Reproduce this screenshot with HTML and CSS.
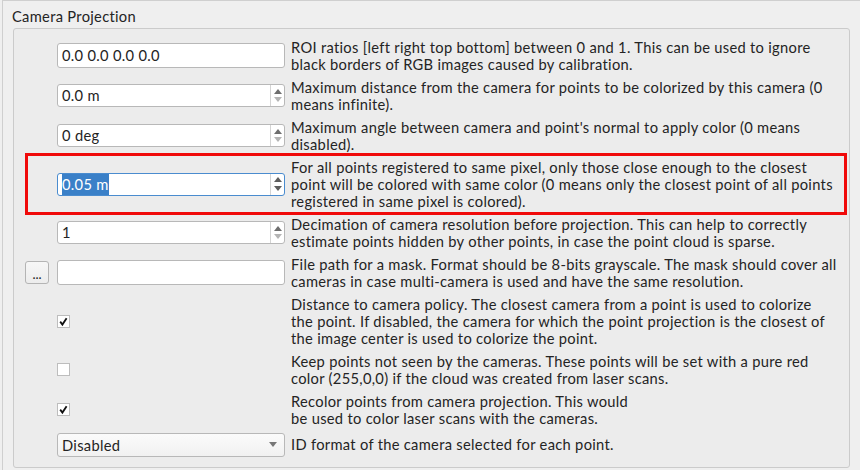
FILE: index.html
```html
<!DOCTYPE html>
<html>
<head>
<meta charset="utf-8">
<link rel="stylesheet" href="styles.css">
</head>
<body>
<div class="window">
  <div class="group-title">Camera Projection</div>
  <div class="group">
    <div class="rows">
      <div class="row">
        <div class="lead"></div>
        <div class="field"><div class="lineedit">0.0 0.0 0.0 0.0</div></div>
        <div class="label">ROI ratios [left right top bottom] between 0 and 1. This can be used to ignore<br>black borders of RGB images caused by calibration.</div>
      </div>
      <div class="row">
        <div class="lead"></div>
        <div class="field">
          <div class="spin">
            <span class="spin-text">0.0 m</span>
            <span class="spin-btns">
              <svg class="arr" width="8" height="5" viewBox="0 0 8 5"><path d="M0 5 L4 0 L8 5 Z" fill="#6e6e6e"/></svg>
              <svg class="arr" width="8" height="5" viewBox="0 0 8 5"><path d="M0 0 L4 5 L8 0 Z" fill="#b4b4b4"/></svg>
            </span>
          </div>
        </div>
        <div class="label">Maximum distance from the camera for points to be colorized by this camera (0<br>means infinite).</div>
      </div>
      <div class="row">
        <div class="lead"></div>
        <div class="field">
          <div class="spin">
            <span class="spin-text">0 deg</span>
            <span class="spin-btns">
              <svg class="arr" width="8" height="5" viewBox="0 0 8 5"><path d="M0 5 L4 0 L8 5 Z" fill="#6e6e6e"/></svg>
              <svg class="arr" width="8" height="5" viewBox="0 0 8 5"><path d="M0 0 L4 5 L8 0 Z" fill="#b4b4b4"/></svg>
            </span>
          </div>
        </div>
        <div class="label">Maximum angle between camera and point's normal to apply color (0 means<br>disabled).</div>
      </div>
      <div class="row highlight">
        <div class="lead"></div>
        <div class="field">
          <div class="spin focused">
            <span class="spin-text"><span class="sel">0.05 m</span></span>
            <span class="spin-btns">
              <svg class="arr" width="8" height="5" viewBox="0 0 8 5"><path d="M0 5 L4 0 L8 5 Z" fill="#5e5e5e"/></svg>
              <svg class="arr" width="8" height="5" viewBox="0 0 8 5"><path d="M0 0 L4 5 L8 0 Z" fill="#5e5e5e"/></svg>
            </span>
          </div>
        </div>
        <div class="label">For all points registered to same pixel, only those close enough to the closest<br>point will be colored with same color (0 means only the closest point of all points<br>registered in same pixel is colored).</div>
      </div>
      <div class="row">
        <div class="lead"></div>
        <div class="field">
          <div class="spin">
            <span class="spin-text">1</span>
            <span class="spin-btns">
              <svg class="arr" width="8" height="5" viewBox="0 0 8 5"><path d="M0 5 L4 0 L8 5 Z" fill="#6e6e6e"/></svg>
              <svg class="arr" width="8" height="5" viewBox="0 0 8 5"><path d="M0 0 L4 5 L8 0 Z" fill="#b4b4b4"/></svg>
            </span>
          </div>
        </div>
        <div class="label">Decimation of camera resolution before projection. This can help to correctly<br>estimate points hidden by other points, in case the point cloud is sparse.</div>
      </div>
      <div class="row">
        <div class="lead"><div class="btn">...</div></div>
        <div class="field"><div class="lineedit"></div></div>
        <div class="label">File path for a mask. Format should be 8-bits grayscale. The mask should cover all<br>cameras in case multi-camera is used and have the same resolution.</div>
      </div>
      <div class="row">
        <div class="lead"></div>
        <div class="field">
          <span class="check"><svg width="11" height="11" viewBox="0 0 11 11"><path d="M2.2 5.6 L4.4 8.6 L8.6 2.2" fill="none" stroke="#111" stroke-width="1.8" stroke-linejoin="miter"/></svg></span>
        </div>
        <div class="label">Distance to camera policy. The closest camera from a point is used to colorize<br>the point. If disabled, the camera for which the point projection is the closest of<br>the image center is used to colorize the point.</div>
      </div>
      <div class="row">
        <div class="lead"></div>
        <div class="field"><span class="check"></span></div>
        <div class="label">Keep points not seen by the cameras. These points will be set with a pure red<br>color (255,0,0) if the cloud was created from laser scans.</div>
      </div>
      <div class="row">
        <div class="lead"></div>
        <div class="field">
          <span class="check"><svg width="11" height="11" viewBox="0 0 11 11"><path d="M2.2 5.6 L4.4 8.6 L8.6 2.2" fill="none" stroke="#111" stroke-width="1.8" stroke-linejoin="miter"/></svg></span>
        </div>
        <div class="label">Recolor points from camera projection. This would<br>be used to color laser scans with the cameras.</div>
      </div>
      <div class="row">
        <div class="lead"></div>
        <div class="field">
          <div class="combo">
            <span class="combo-text">Disabled</span>
            <svg width="8" height="5" viewBox="0 0 8 5"><path d="M0 0 L4 5 L8 0 Z" fill="#777"/></svg>
          </div>
        </div>
        <div class="label">ID format of the camera selected for each point.</div>
      </div>
    </div>
  </div>
</div>
</body>
</html>
```

FILE: styles.css
```css
html, body {
  margin: 0;
  padding: 0;
  background: #efefef;
}

body {
  width: 860px;
  height: 470px;
  overflow: hidden;
  font-family: Lato, "Noto Sans", sans-serif;
  font-size: 14.7px;
  letter-spacing: 0.3px;
  color: #242424;
}

.window {
  margin-left: 2px;
  height: 470px;
  border-top: 1px solid #cfcfcf;
  border-left: 1px solid #cfcfcf;
  box-sizing: border-box;
}

.group-title {
  height: 27px;
  line-height: 17px;
  padding: 7px 0 0 9px;
  box-sizing: border-box;
}

.group {
  margin-left: 10px;
  width: 837px;
  height: 440px;
  border: 1px solid #cbcbcb;
  border-radius: 3px;
  box-sizing: border-box;
  background: #ececec;
  padding: 9.5px 2px 0 11px;
}

.rows {
  display: flex;
  flex-direction: column;
  gap: 6px;
}

.row {
  display: flex;
  align-items: center;
}

.row.highlight {
  margin: -6px 0 -5px;
  padding: 6px 0 5px;
  box-shadow: inset 0 0 0 3px #f00a0a;
}

.lead {
  width: 24px;
  margin-right: 8px;
  display: flex;
}

.field {
  width: 228px;
  margin-right: 6px;
  display: flex;
  align-items: center;
}

.label {
  line-height: 17px;
  white-space: nowrap;
}

.lineedit {
  width: 100%;
  height: 25px;
  box-sizing: border-box;
  background: #fff;
  border: 1px solid #b8b8b8;
  border-radius: 3px;
  padding: 0 4px;
  line-height: 23px;
}

.spin {
  width: 100%;
  height: 23px;
  box-sizing: border-box;
  background: #fff;
  border: 1px solid #b8b8b8;
  border-radius: 3px;
  display: flex;
}

.spin.focused {
  border-color: #4a8ccf;
}

.spin-text {
  flex: 1;
  padding-left: 4px;
  line-height: 21px;
}

.sel {
  background: #3a80c8;
  color: #fff;
  padding: 1px 0 2px;
}

.spin-btns {
  width: 13px;
  border-left: 1px solid #d4d4d4;
  display: flex;
  flex-direction: column;
  align-items: center;
  justify-content: space-around;
  padding: 2px 0;
}

.arr {
  display: block;
}

.btn {
  width: 24px;
  height: 23px;
  box-sizing: border-box;
  border: 1px solid #b4b4b4;
  border-radius: 3px;
  background: linear-gradient(#f7f7f7, #ececec);
  text-align: center;
  line-height: 24px;
  font-size: 13px;
  letter-spacing: 0;
}

.check {
  width: 13px;
  height: 13px;
  box-sizing: border-box;
  border: 1px solid #bdbdbd;
  background: #fff;
  display: flex;
  align-items: center;
  justify-content: center;
}

.check svg {
  display: block;
}

.combo {
  width: 100%;
  height: 24px;
  box-sizing: border-box;
  border: 1px solid #b8b8b8;
  border-radius: 3px;
  background: linear-gradient(#fbfbfb, #f1f1f1);
  display: flex;
  align-items: center;
  padding: 0 7px 0 4px;
}

.combo-text {
  flex: 1;
}

.combo svg {
  display: block;
}
```
